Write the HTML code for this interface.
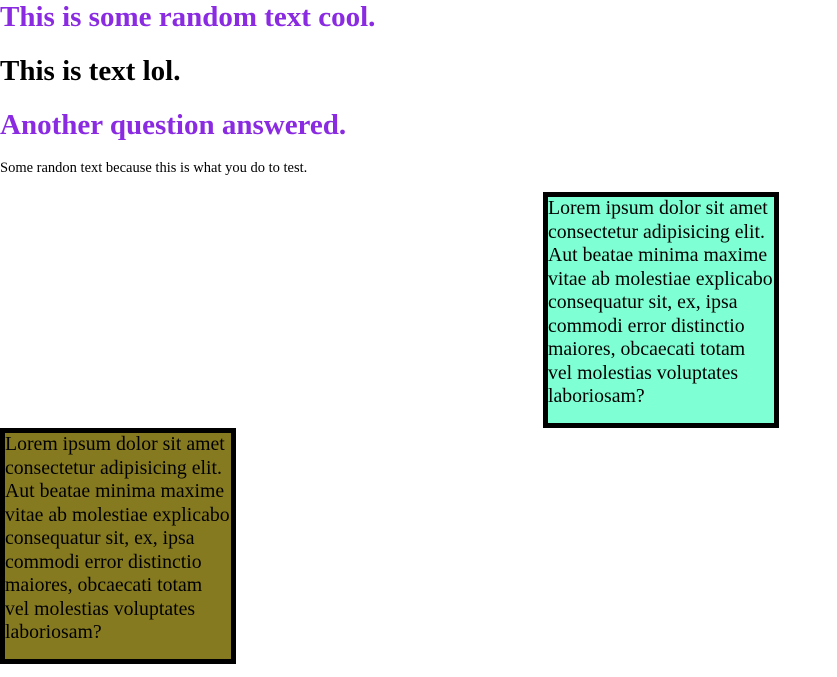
<!DOCTYPE html>
<html><head><style>
body{margin:0;width:837px;height:677px;position:relative;font-family:"Liberation Serif",serif;background:#fff;overflow:hidden}
.h{position:absolute;left:0;margin:0;font-weight:bold;font-size:29px;line-height:32px;white-space:nowrap}
.p{color:#8a2be2}
.s{position:absolute;left:0;top:160px;font-size:14.5px;line-height:17px;white-space:nowrap}
.box{position:absolute;width:226px;height:226px;border:5px solid #000;font-size:19.8px;line-height:23.5px;padding:0;box-sizing:content-box;white-space:nowrap;overflow:hidden}
</style></head><body>
<div class="h p" style="top:1px">This is some random text cool.</div>
<div class="h" style="top:55px">This is text lol.</div>
<div class="h p" style="top:109px">Another question answered.</div>
<div class="s">Some randon text because this is what you do to test.</div>
<div class="box" style="left:543px;top:192px;background:#7fffd4">Lorem ipsum dolor sit amet<br>consectetur adipisicing elit.<br>Aut beatae minima maxime<br>vitae ab molestiae explicabo<br>consequatur sit, ex, ipsa<br>commodi error distinctio<br>maiores, obcaecati totam<br>vel molestias voluptates<br>laboriosam?</div>
<div class="box" style="left:0;top:428px;background:#867a20">Lorem ipsum dolor sit amet<br>consectetur adipisicing elit.<br>Aut beatae minima maxime<br>vitae ab molestiae explicabo<br>consequatur sit, ex, ipsa<br>commodi error distinctio<br>maiores, obcaecati totam<br>vel molestias voluptates<br>laboriosam?</div>
</body></html>
